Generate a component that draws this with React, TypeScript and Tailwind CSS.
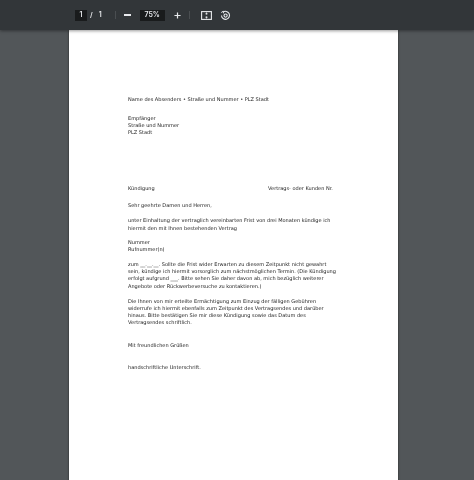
export default function App() {
  const Block = ({ lines, mt }: { lines: string[]; mt: string }) => (
    <div className={mt}>
      {lines.map((l) => (
        <div key={l} className="h-[7.3px] leading-[7.3px] whitespace-nowrap">{l}</div>
      ))}
    </div>
  );
  return (
    <div className="w-[474px] h-[480px] overflow-hidden bg-[#525659] flex flex-col font-['DejaVu_Sans',sans-serif]">
      <div className="h-[30px] shrink-0 bg-[#323639] shadow-[0_1px_3px_rgba(0,0,0,0.4)] z-10 flex items-center text-[#e8eaed] blur-[0.4px]">
        <div className="ml-[75px] w-[12px] h-[11px] bg-[#191b1c] flex items-center justify-center text-[7px] font-['Inter',sans-serif] font-semibold">1</div>
        <span className="ml-[3px] text-[7px] font-['Inter',sans-serif] font-semibold">/</span>
        <span className="ml-[6px] text-[7px] font-['Inter',sans-serif] font-semibold">1</span>
        <div className="ml-[13px] w-px h-[8px] bg-[#4a4e51]" />
        <div className="ml-[8px] w-[7px] h-[1.5px] bg-[#e8eaed]" />
        <div className="ml-[9px] w-[25px] h-[11px] bg-[#191b1c] flex items-center justify-center text-[7px] font-['Inter',sans-serif] font-semibold">75%</div>
        <svg className="ml-[9px]" width="7" height="7" viewBox="0 0 8 8"><path d="M4 0.5v7M0.5 4h7" stroke="#e8eaed" strokeWidth="1.4" /></svg>
        <div className="ml-[8px] w-px h-[8px] bg-[#4a4e51]" />
        <svg className="ml-[11px]" width="11" height="9" viewBox="0 0 11 9" fill="none" stroke="#e8eaed"><rect x="0.6" y="0.6" width="9.8" height="7.8" strokeWidth="1.1" /><path d="M5.5 1.5v2M4.4 2.8h2.2M5.5 7.5v-2M4.4 6.2h2.2" strokeWidth="0.9" /></svg>
        <svg className="ml-[8px]" width="11" height="11" viewBox="0 0 11 11" fill="none" stroke="#e8eaed" strokeWidth="1.1"><path d="M3 2.2A4 4 0 1 1 1.5 5.5" /><path d="M1.2 2.6 3.2 1.2 3.6 3.4" strokeWidth="0.9" /><circle cx="5.6" cy="5.6" r="1.6" /></svg>
      </div>
      <div className="flex-1 flex justify-start">
        <div className="ml-[69px] w-[329px] h-[470px] bg-white shadow-[0_0_2px_rgba(0,0,0,0.6)] pl-[59px] pt-[65.5px] text-[5.03px] text-[#222] blur-[0.4px]">
          <Block mt="" lines={["Name des Absenders • Straße und Nummer • PLZ Stadt"]} />
          <Block mt="mt-[12px]" lines={["Empfänger", "Straße und Nummer", "PLZ Stadt"]} />
          <div className="mt-[48px] h-[7.3px] leading-[7.3px] flex whitespace-nowrap">
            <span className="w-[140px]">Kündigung</span>
            <span>Vertrags- oder Kunden Nr.</span>
          </div>
          <Block mt="mt-[10.4px]" lines={["Sehr geehrte Damen und Herren,"]} />
          <Block mt="mt-[7.6px]" lines={["unter Einhaltung der vertraglich vereinbarten Frist von drei Monaten kündige ich", "hiermit den mit Ihnen bestehenden Vertrag"]} />
          <Block mt="mt-[7px]" lines={["Nummer", "Rufnummer(n)"]} />
          <Block mt="mt-[7.3px]" lines={["zum __.__.__. Sollte die Frist wider Erwarten zu diesem Zeitpunkt nicht gewahrt", "sein, kündige ich hiermit vorsorglich zum nächstmöglichen Termin. (Die Kündigung", "erfolgt aufgrund ___. Bitte sehen Sie daher davon ab, mich bezüglich weiterer", "Angebote oder Rückwerbeversuche zu kontaktieren.)"]} />
          <Block mt="mt-[7.6px]" lines={["Die Ihnen von mir erteilte Ermächtigung zum Einzug der fälligen Gebühren", "widerrufe ich hiermit ebenfalls zum Zeitpunkt des Vertragsendes und darüber", "hinaus. Bitte bestätigen Sie mir diese Kündigung sowie das Datum des", "Vertragsendes schriftlich."]} />
          <Block mt="mt-[15px]" lines={["Mit freundlichen Grüßen"]} />
          <Block mt="mt-[15px]" lines={["handschriftliche Unterschrift."]} />
        </div>
      </div>
    </div>
  );
}
